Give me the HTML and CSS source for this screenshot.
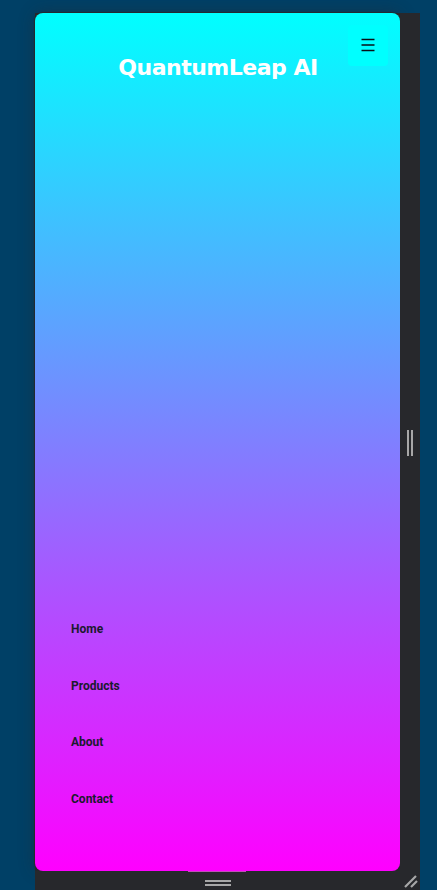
FILE: index.html
```
<!DOCTYPE html>
<html lang="en">
<head>
<meta charset="utf-8">
<title>QuantumLeap AI</title>
<link rel="stylesheet" href="styles.css">
</head>
<body>
<div class="device">
  <main class="screen">
    <header class="header">
      <h1 class="title">QuantumLeap AI</h1>
      <button class="menu" aria-label="Menu">
        <svg width="14" height="14" viewBox="0 0 14 14" fill="none" stroke="#081018" stroke-width="1.4"><path d="M.5 1.5h13M.5 7h13M.5 12.5h13"/></svg>
      </button>
    </header>
    <nav class="nav">
      <a>Home</a>
      <a>Products</a>
      <a>About</a>
      <a>Contact</a>
    </nav>
  </main>
  <div class="side"><svg width="6" height="26" viewBox="0 0 6 26" fill="#a7a7a8"><path d="M0 0h2v26H0zM4 0h2v26H4z"/></svg></div>
  <div class="bottom"><svg width="26" height="6" viewBox="0 0 26 6" fill="#a7a7a8"><path d="M0 0h26v2H0zM0 4h26v2H0z"/></svg></div>
  <div class="corner"><svg width="14" height="13" viewBox="0 0 14 13" fill="none" stroke="#a7a7a8" stroke-width="2.2"><path d="M1 12 12 1M7 12l6-6"/></svg></div>
</div>
</body>
</html>
```
FILE: styles.css
```
* { box-sizing: border-box; }
body {
  margin: 0;
  height: 890px;
  padding: 13px 17px 0 35px;
  background: #004066;
  overflow: hidden;
}
.device {
  display: grid;
  grid-template-columns: 365px 20px;
  grid-template-rows: 858px 19px;
  background: #27282c;
}
.screen {
  display: flex;
  flex-direction: column;
  justify-content: space-between;
  border-radius: 8px;
  background: linear-gradient(#00ffff, #ff00ff);
  box-shadow: 0 0 1px 1px #27282c, 0 0 16px rgba(39, 40, 44, .45);
}
.header { position: relative; padding-top: 41px; }
.title {
  margin: 0 0 0 1px;
  font: 700 22px/28px "DejaVu Sans", sans-serif;
  letter-spacing: -.5px;
  text-align: center;
  white-space: nowrap;
  color: #fff;
}
.menu {
  position: absolute;
  top: 12px;
  right: 12px;
  display: flex;
  align-items: center;
  justify-content: center;
  width: 40px;
  height: 41px;
  padding: 0 0 1px;
  border: 0;
  border-radius: 4px;
  background: #00ffff;
}
.nav {
  display: flex;
  flex-direction: column;
  gap: 36.67px;
  padding: 0 36px 62px;
  font: 700 12px/20px Roboto, sans-serif;
  color: #1a1a2e;
}
.side, .bottom, .corner {
  display: flex;
  align-items: center;
  justify-content: center;
}
.side { background: #27282c; padding-top: 2px; }
.bottom {
  position: relative;
  background: #27282c;
  padding-top: 5px;
}
.bottom::before {
  content: "";
  position: absolute;
  top: 0;
  left: 153px;
  width: 58px;
  height: 1px;
  background: #c050b8;
}
.corner { background: #27282c; padding: 2px 0 0 1px; }
```
